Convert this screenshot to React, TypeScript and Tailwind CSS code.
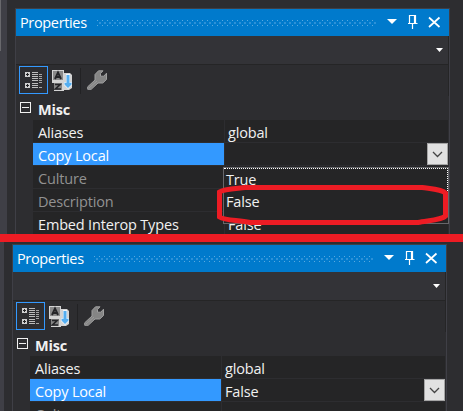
import type { ReactNode } from 'react';

type Row = { name: string; value?: string; state?: 'selected' | 'disabled' };

function Grip() {
  return (
    <svg width="280" height="6" className="shrink-0" shapeRendering="crispEdges">
      <defs>
        <pattern id="grip" width="5" height="6" patternUnits="userSpaceOnUse">
          <rect x="0" y="0" width="1" height="1" fill="#59a9e0" />
          <rect x="2" y="2" width="2" height="2" fill="#2c91d8" />
          <rect x="0" y="5" width="1" height="1" fill="#59a9e0" />
        </pattern>
      </defs>
      <rect width="280" height="6" fill="url(#grip)" />
    </svg>
  );
}

function TitleIcons() {
  return (
    <svg width="54" height="15" className="shrink-0">
      <path d="M0 4h10l-5 5z" fill="#fff" />
      <path d="M22.5 8.5v-8h6v8M21 8.5h9.500M25.5 9v5M27.5 1v7" fill="none" stroke="#fff" strokeWidth="1.2" />
      <path d="M42 2.5l10.5 9.5M52.5 2.5l-10.5 9.5" stroke="#fff" strokeWidth="1.7" />
    </svg>
  );
}

function CategorizedIcon() {
  return (
    <svg width="27" height="26" shapeRendering="crispEdges">
      {[5, 16].map((y) => (
        <g key={y}>
          <rect x="5" y={y} width="5" height="5" fill="#d0d0d0" />
          <path d={`M7 ${y + 1}h1v1h1v1h-1v1h-1v-1h-1v-1h1z`} fill="#252526" />
        </g>
      ))}
      {[5, 7, 9, 11, 13, 16, 18, 20].map((y) => (
        <rect key={y} x="12" y={y} width="6" height="1" fill="#bcbcbc" />
      ))}
      {[7, 9, 11, 13, 15, 20].map((y) => (
        <rect key={y} x="19" y={y} width="3" height="1" fill="#a5a5a5" />
      ))}
    </svg>
  );
}

function SortIcon() {
  return (
    <svg width="21" height="21">
      <path d="M0 0h12v3h6l2 2v13l-3 2h-5v1H2v-8H0z" fill="#d4d4d4" />
      <rect x="1" y="1" width="10" height="9" fill="#8a8a8a" />
      <path d="M3 9L6 2.5 9 9M4.2 7h3.6" fill="none" stroke="#252528" strokeWidth="1.9" />
      <rect x="2" y="13" width="8" height="7" fill="#858585" />
      <path d="M3 14.5h5l-4.5 4.5H9" fill="none" stroke="#252528" strokeWidth="1.7" />
      <path d="M14 4h4v8h2v3l-4 4-4-4v-3h2z" fill="#f0f5fa" />
      <path d="M14.500 5h3v8l2-.5v2l-3.500 3.500-3.500-3.500v-2l2 .5z" fill="#55aef0" />
    </svg>
  );
}

function WrenchIcon() {
  return (
    <svg width="21" height="21">
      <path
        d="M16 .8L11.5 .8L8 4.5V10L.7 16.8V19.3H4.2L11 13H15.8L19.5 9.5V3.2L16.8 6.2L13.5 6.2V3.5Z"
        fill="#858585"
        stroke="#a0a0a0"
        strokeLinejoin="round"
      />
      <path d="M2 18l8-7" stroke="#9b9b9b" strokeWidth="1" />
    </svg>
  );
}

function DropButton() {
  return (
    <div className="flex h-[22px] w-[21px] shrink-0 items-center justify-center border border-[#a5a5a5] bg-[#e1e1e1]">
      <svg width="11" height="7">
        <path d="M1 1l4.5 4.5L10 1" fill="none" stroke="#444" strokeWidth="1.3" />
      </svg>
    </div>
  );
}

function PropertyRow({ row }: { row: Row }) {
  const selected = row.state === 'selected';
  return (
    <div className="mb-px flex h-[22px] shrink-0 bg-[#252526] leading-[25px]">
      <div
        className={`w-[191px] pl-[5px] ${selected ? 'bg-[#3399ff] text-white' : row.state === 'disabled' ? 'text-[#929292]' : 'text-[#f1f1f1]'}`}
      >
        {row.name}
      </div>
      <div className="w-px bg-[#2d2d30]" />
      <div className="flex-1 pl-[3px]">{row.value}</div>
      {selected && <DropButton />}
    </div>
  );
}

function PropertiesPanel({ rows, children }: { rows: Row[]; children?: ReactNode }) {
  return (
    <div className="relative flex h-[300px] w-[435px] shrink-0 flex-col border border-[#3f3f46] bg-[#2d2d30]">
      <div className="flex h-[27px] shrink-0 items-center bg-[#007acc] pl-1 text-white">
        <span className="w-[77px] shrink-0 leading-[26px] tracking-[-0.35px]">Properties</span>
        <Grip />
        <div className="-mt-[1px] ml-[10px] flex"><TitleIcons /></div>
      </div>
      <div className="flex h-7 shrink-0 items-center justify-end border-r border-[#252526] bg-[#333337] pr-[5px]">
        <svg width="7" height="4"><path d="M0 0h7L3.5 4z" fill="#fff" /></svg>
      </div>
      <div className="flex h-8 shrink-0 items-start border-t border-r border-[#252526] pt-px pl-[3px]">
        <div className="h-7 w-[29px] border border-[#3399ff]"><CategorizedIcon /></div>
        <div className="mt-1 ml-1"><SortIcon /></div>
        <div className="mt-[2px] ml-[7px] h-[26px] w-px bg-[#222224]" />
        <div className="mt-1 ml-[6px]"><WrenchIcon /></div>
      </div>
      <div className="flex h-6 shrink-0 items-start pl-1">
        <div className="mt-[6px] flex size-[11px] items-center justify-center border border-[#f1f1f1]">
          <div className="h-px w-[7px] bg-[#f1f1f1]" />
        </div>
        <span className="ml-[7px] font-bold leading-[27px] tracking-[-0.2px]">Misc</span>
      </div>
      <div className="mr-px ml-[17px] flex flex-col">
        {rows.map((row) => <PropertyRow key={row.name} row={row} />)}
      </div>
      {children}
    </div>
  );
}

function ValueMenu() {
  return (
    <div className="absolute top-[158px] left-[207px] h-[57px] w-[226px] border border-[#66666a] bg-[#252526]">
      <div className="h-[23px] border-t border-r border-dotted border-white pl-[2px] leading-[22px]">True</div>
      <div className="pl-[2px] leading-[22px]">False</div>
    </div>
  );
}

export default function App() {
  return (
    <div className="relative h-[411px] w-[463px] overflow-hidden bg-[#2d2d30] font-['Open_Sans','Noto_Sans',sans-serif] text-[14.5px] leading-[22px] tracking-[-0.17px] text-[#f1f1f1]">
      <div className="flex h-[234px] overflow-hidden">
        <div className="w-[7px] shrink-0 bg-[#3f3f46]"><div className="h-[51px] w-px bg-[#68686c]" /></div>
        <div className="pt-2 pl-2">
          <PropertiesPanel
            rows={[
              { name: 'Aliases', value: 'global' },
              { name: 'Copy Local', state: 'selected' },
              { name: 'Culture', state: 'disabled' },
              { name: 'Description', state: 'disabled' },
              { name: 'Embed Interop Types', value: 'False' },
            ]}
          >
            <ValueMenu />
          </PropertiesPanel>
        </div>
      </div>
      <div className="h-2 bg-[#ed1c24]" />
      <div className="flex h-[169px] overflow-hidden">
        <div className="w-1 shrink-0 bg-[#3f3f46]" />
        <div className="pt-[2px] pl-2">
          <PropertiesPanel
            rows={[
              { name: 'Aliases', value: 'global' },
              { name: 'Copy Local', value: 'False', state: 'selected' },
              { name: 'Culture', state: 'disabled' },
            ]}
          />
        </div>
      </div>
      <svg className="absolute top-[182px] left-[214px]" width="238" height="46" viewBox="214 182 238 46">
        <path
          d="M422 187.5C432 189 442 189.500 445.5 193V216C442 220 428 220.500 418 222.5H250C237 220 225 220.500 219.500 217V192C224 188.500 238 188.500 245 187.500Z"
          fill="none"
          stroke="#ed1c24"
          strokeWidth="5"
        />
      </svg>
    </div>
  );
}
